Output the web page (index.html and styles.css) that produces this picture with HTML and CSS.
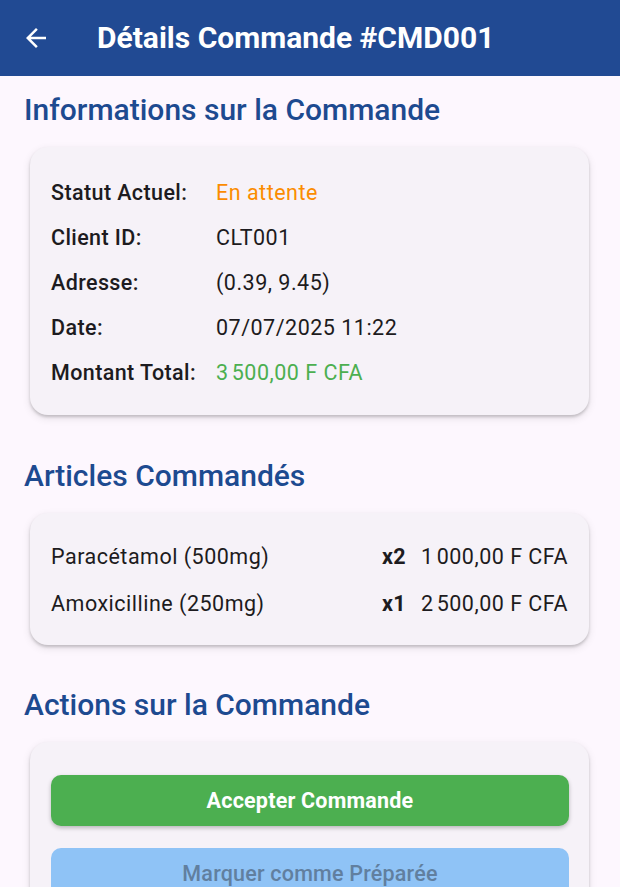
FILE: index.html
```html
<!DOCTYPE html>
<html lang="fr">
<head>
<meta charset="utf-8">
<title>Détails Commande #CMD001</title>
<link rel="stylesheet" href="styles.css">
</head>
<body>
<header class="appbar">
  <svg class="back" viewBox="0 0 24 24" width="24" height="24" aria-hidden="true">
    <path d="M20 11H7.83l5.59-5.59L12 4l-8 8 8 8 1.41-1.41L7.83 13H20v-2z" fill="#fff"/>
  </svg>
  <h1 class="title">Détails Commande #CMD001</h1>
</header>
<main class="content">
  <h2 class="section-title">Informations sur la Commande</h2>
  <section class="card info-card">
    <div class="info-row"><span class="label">Statut Actuel:</span><span class="value status">En attente</span></div>
    <div class="info-row"><span class="label">Client ID:</span><span class="value">CLT001</span></div>
    <div class="info-row"><span class="label">Adresse:</span><span class="value">(0.39, 9.45)</span></div>
    <div class="info-row"><span class="label">Date:</span><span class="value">07/07/2025 11:22</span></div>
    <div class="info-row"><span class="label">Montant Total:</span><span class="value total">3&#8239;500,00 F CFA</span></div>
  </section>

  <h2 class="section-title">Articles Commandés</h2>
  <section class="card items-card">
    <div class="item-row"><span class="item-name">Paracétamol (500mg)</span><span class="qty">x2</span><span class="price">1&#8239;000,00 F CFA</span></div>
    <div class="item-row"><span class="item-name">Amoxicilline (250mg)</span><span class="qty">x1</span><span class="price">2&#8239;500,00 F CFA</span></div>
  </section>

  <h2 class="section-title">Actions sur la Commande</h2>
  <section class="card actions-card">
    <button class="btn btn-accept">Accepter Commande</button>
    <button class="btn btn-prepared" disabled>Marquer comme Préparée</button>
  </section>
</main>
</body>
</html>
```

FILE: styles.css
```css
* { box-sizing: border-box; }
html, body { margin: 0; padding: 0; }
body {
  background: #fdf7fe;
  font-family: Roboto, "Liberation Sans", sans-serif;
  color: #1d1b20;
  width: 620px;
  height: 887px;
  overflow: hidden;
}
.appbar {
  height: 76px;
  background: #214a93;
  display: flex;
  align-items: center;
  padding-left: 24px;
}
.back { width: 24px; height: 24px; flex: none; transform: scale(1.25); }
.title {
  margin: 0 0 0 49px;
  color: #fff;
  font-size: 30px;
  font-weight: 700;
  line-height: 36px;
  letter-spacing: 0;
}
.content { padding: 16px 24px 0 24px; }
.section-title {
  margin: 0 0 19px 0;
  color: #1d4a90;
  font-size: 30px;
  font-weight: 500;
  line-height: 36px;
}
.card {
  margin: 0 7px 43px 6px;
  background: #f6f2f8;
  border-radius: 18px;
  box-shadow: 0 2px 3px rgba(0,0,0,0.18), 0 3px 8px rgba(0,0,0,0.10);
}
.info-card { padding: 23px 21px 20px 21px; }
.info-row {
  display: flex;
  align-items: center;
  height: 45px;
  font-size: 21.5px;
  letter-spacing: 0.5px;
}
.label { width: 165px; font-weight: 500; flex: none; letter-spacing: 0.4px; }
.value { font-weight: 400; }
.status { color: #fb8c00; }
.total { color: #4caf50; }
.items-card { padding: 20px 21px 18px 21px; margin-bottom: 42px; }
.item-row {
  display: flex;
  align-items: center;
  height: 47px;
  font-size: 21.5px;
  letter-spacing: 0.5px;
}
.item-name { flex: 1; }
.qty { font-weight: 700; margin-right: 15px; letter-spacing: 0.3px; }
.actions-card {
  padding: 33px 20px 40px 21px;
  display: flex;
  flex-direction: column;
  gap: 22px;
  margin-bottom: 0;
}
.btn {
  height: 51px;
  border: none;
  border-radius: 10px;
  font-family: Roboto, "Liberation Sans", sans-serif;
  font-size: 21.5px;
  font-weight: 700;
  letter-spacing: 0.2px;
  width: 100%;
}
.btn-accept {
  background: #4caf50;
  color: #fff;
  box-shadow: 0 2px 4px rgba(0,0,0,0.25);
}
.btn-prepared {
  background: #8fc3f6;
  color: #617f9f;
  font-weight: 500;
}
```
